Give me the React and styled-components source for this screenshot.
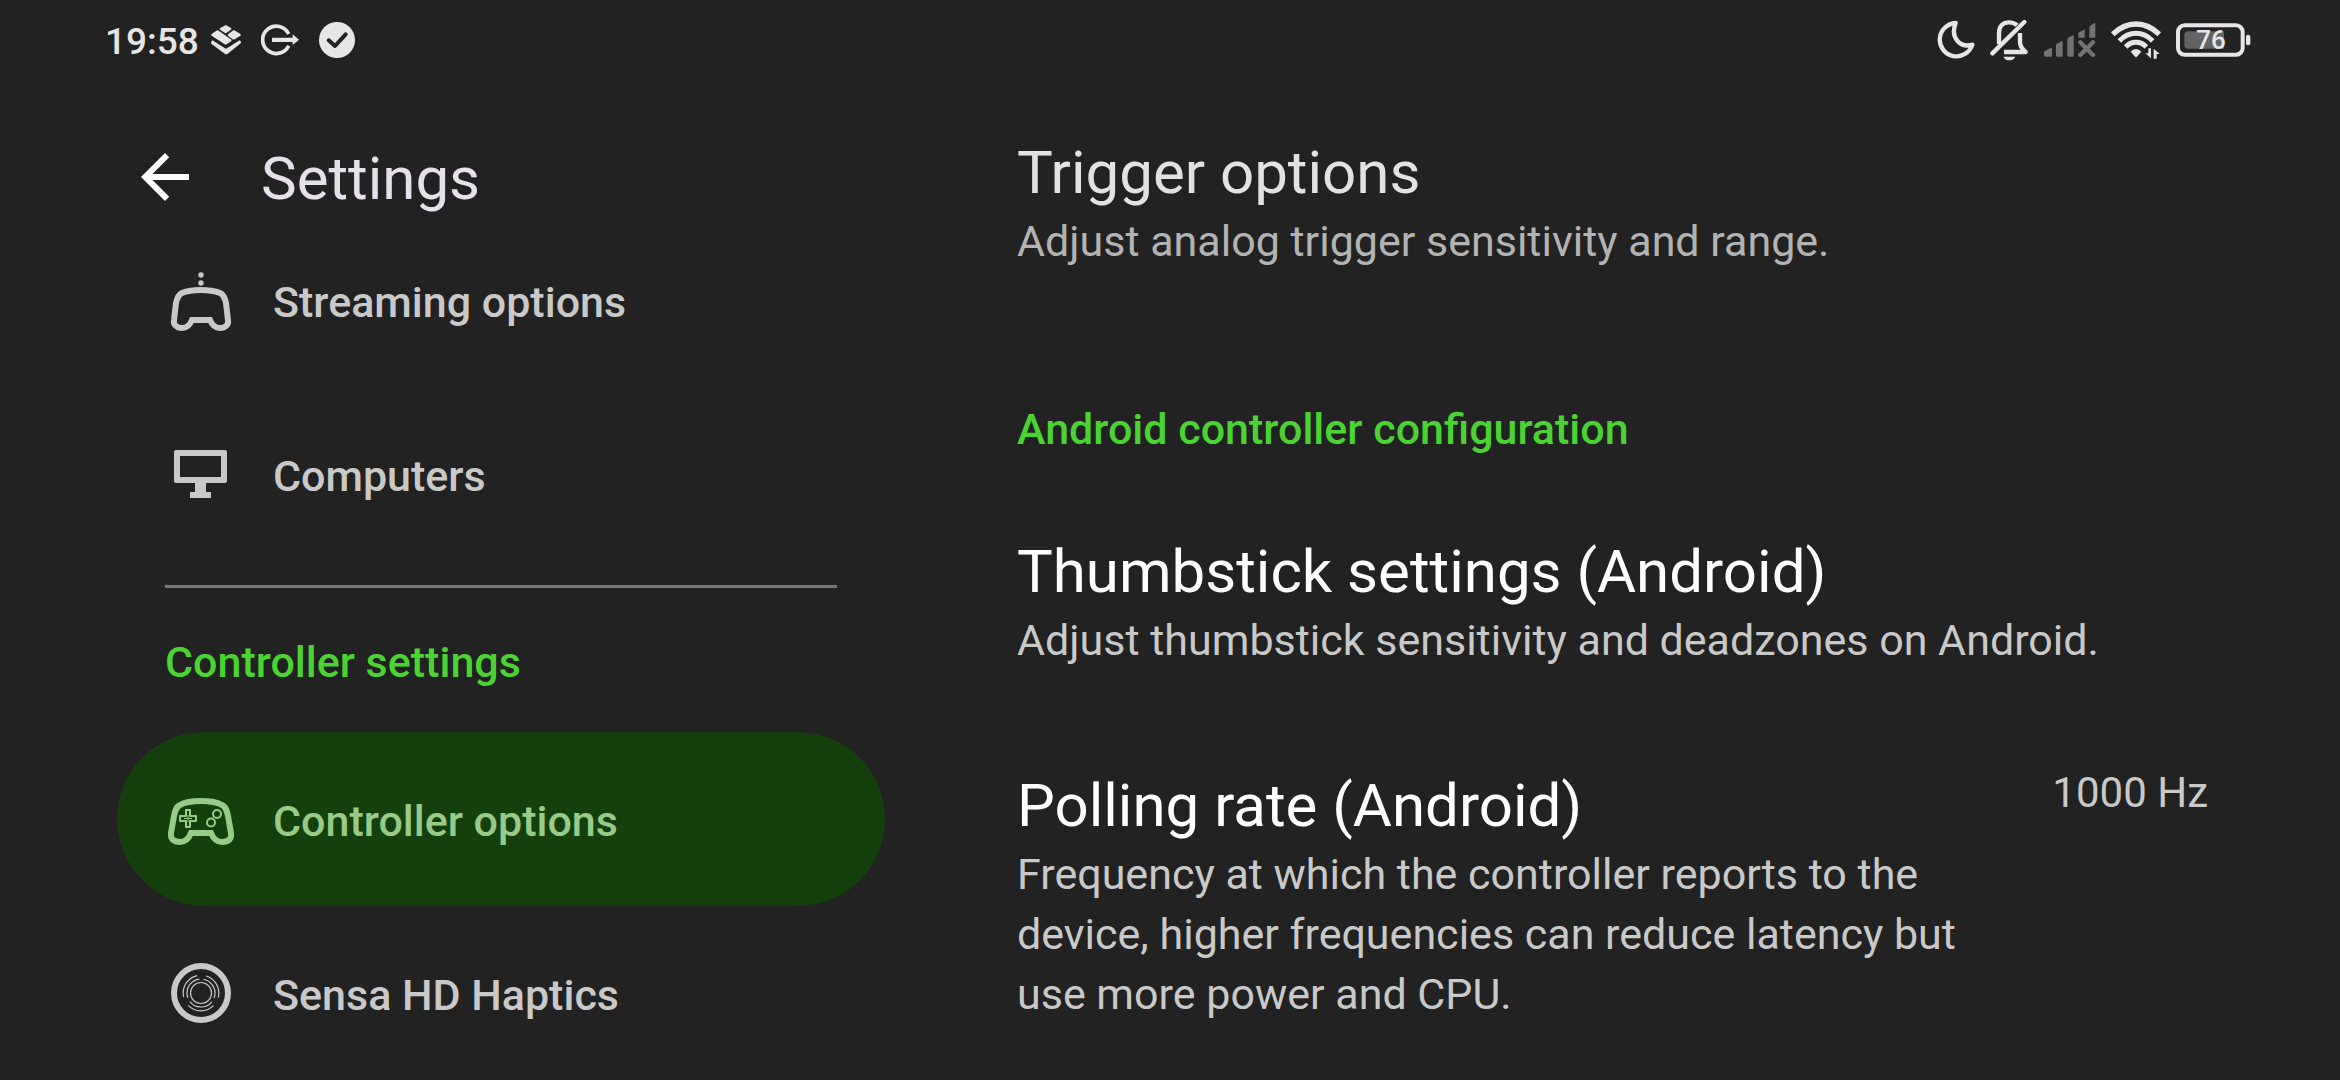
import styled, { createGlobalStyle } from 'styled-components'

const textColor = '#C9C9C9'
const accentColor = '#4BD333'
const statusColor = '#E6E6E6'

const GlobalStyle = createGlobalStyle`
    body {
        margin: 0;
        background-color: #222222;
        color: ${textColor};
        font-family: Roboto, sans-serif;
        overflow: hidden;
    }
`

const Screen = styled.div`
    height: 100vh;
    display: flex;
    flex-direction: column;
    overflow: hidden;
`

const StatusBar = styled.header`
    flex: none;
    height: 80px;
    box-sizing: border-box;
    padding: 0 88px 0 105px;
    display: flex;
    align-items: center;
    justify-content: space-between;
    color: ${statusColor};
`

const StatusGroup = styled.div`
    display: flex;
    align-items: center;
    gap: ${props => props.gap};
`

const Clock = styled.time`
    font-size: 37px;
    line-height: 44px;
    font-weight: 500;
    margin-top: 4px;
    margin-right: -8px;
`

const Glyph = styled.svg`
    display: block;
    flex: none;
    width: ${props => props.$w}px;
    height: ${props => props.$h}px;
`

const Battery = styled.div`
    position: relative;
    display: flex;
`

const BatteryLevel = styled.span`
    position: absolute;
    inset: 0 6px 0 0;
    display: flex;
    align-items: center;
    justify-content: center;
    font-size: 26px;
    font-weight: 500;
`

const Panes = styled.div`
    flex: 1;
    min-height: 0;
    display: grid;
    grid-template-columns: 945px 1fr;
`

const Sidebar = styled.aside`
    min-height: 0;
    padding: 0 60px 0 117px;
`

const Toolbar = styled.div`
    display: flex;
    align-items: center;
    gap: 60px;
    padding: 61px 0 0 12px;
    height: 72px;
`

const BackButton = styled.button`
    display: flex;
    padding: 0;
    border: none;
    background: transparent;
    color: #FFFFFF;
    cursor: pointer;
`

const Title = styled.h1`
    margin: 0;
    padding-top: 4px;
    font-size: 60px;
    line-height: 76px;
    font-weight: 400;
    color: #E6E1E9;
`

const MenuItem = styled.a`
    display: flex;
    align-items: center;
    gap: 36px;
    height: 174px;
    box-sizing: border-box;
    padding: 0 48px;
    border-radius: 87px;
    font-size: 43px;
    line-height: 60px;
    font-weight: 500;
    text-decoration: none;
    color: ${props => props.$active ? '#98CB88' : textColor};
    background-color: ${props => props.$active ? '#15400E' : 'transparent'};
`

const MenuText = styled.span`
    padding-top: 4px;
`

const Divider = styled.hr`
    height: 3px;
    margin: 24px 48px 0;
    border: none;
    background-color: #767876;
`

const MenuLabel = styled.h2`
    margin: 0;
    padding: 44px 48px 40px;
    font-size: 43px;
    line-height: 60px;
    font-weight: 500;
    color: ${accentColor};
`

const Content = styled.main`
    min-height: 0;
    padding: 6px 132px 0 72px;
`

const SectionLabel = styled.h2`
    margin: 0;
    padding: 79px 0 26px;
    font-size: 43px;
    line-height: 60px;
    font-weight: 500;
    color: ${accentColor};
`

const Preference = styled.section`
    display: flex;
    justify-content: space-between;
    gap: 48px;
    padding: 49px 0;
    opacity: ${props => props.$dimmed ? 0.87 : 1};
`

const PreferenceTitle = styled.h3`
    margin: 0;
    font-size: 60px;
    line-height: 76px;
    font-weight: 400;
    color: #FFFFFF;
`

const PreferenceSummary = styled.p`
    margin: 0;
    font-size: 43px;
    line-height: 60px;
`

const PreferenceValue = styled.span`
    flex: none;
    font-size: 42px;
    line-height: 50px;
`

function LayersIcon() {
    return <Glyph $w={30} $h={30} viewBox="0 0 90 90" fill="currentColor">
        <path d="M45 0 60 9Q63 12 60 14L47 23Q44 25 41 23L27 14Q24 11 28 9Z" />
        <path d="M67 16Q70 15 73 17L88 27Q91 30 88 32L71 43Q67 45 64 42L52 33Q49 30 52 27Z" />
        <path d="M16 17Q20 15 23 17L60 43Q63 46 60 49L47 58Q44 60 41 58L2 32Q-1 29 3 26Z" />
        <path d="M4 46 42 70Q45 72 48 70L86 46Q91 50 90 54L50 86Q45 89 41 86L1 56Q-1 51 4 46Z" />
    </Glyph>
}

function ExitIcon() {
    return <Glyph $w={38} $h={32} viewBox="0 0 114 96">
        <path d="M83 30A41 41 0 1 0 83 65" fill="none" stroke="currentColor" strokeWidth="11" />
        <path d="M33 41H95V31L114 47L95 63V54H33Z" fill="currentColor" />
    </Glyph>
}

function CheckBadgeIcon() {
    return <Glyph $w={36} $h={36} viewBox="0 0 108 108">
        <circle cx="54" cy="54" r="54" fill="currentColor" />
        <path d="M29 55 48 72 80 37" fill="none" stroke="#222222" strokeWidth="12" strokeLinecap="round" strokeLinejoin="round" />
    </Glyph>
}

function MoonIcon() {
    return <Glyph $w={38} $h={40} viewBox="0 0 114 120" fill="none" stroke="currentColor" strokeWidth="13" strokeLinejoin="round">
        <path d="M56 9A50 50 0 1 0 106 74C72 84 38 56 56 9Z" />
    </Glyph>
}

function BellOffIcon() {
    return <Glyph $w={39} $h={42} viewBox="0 0 117 126" fill="none" stroke="currentColor" strokeWidth="13">
        <path d="M7 103 103 9" strokeLinecap="round" />
        <path d="M27 76V42C27 19 41 10 57 10C69 10 76 14 81 19" />
        <path d="M90 42V70C90 83 98 92 107 99H42" strokeLinejoin="round" />
        <path d="M40 113H76Q71 124 58 124Q45 124 40 113Z" fill="currentColor" stroke="none" />
    </Glyph>
}

function SignalIcon() {
    return <Glyph $w={52} $h={36} viewBox="0 0 156 108" fill="#737373">
        <path d="M0 91Q0 88 3 87L20 78Q24 77 24 81V104H4Q0 104 0 100Z" />
        <path d="M36 70Q36 66 39 65L52 58Q56 57 56 61V104H40Q36 104 36 100Z" />
        <path d="M70 53Q70 49 73 47L86 40Q89 39 89 43V104H74Q70 104 70 100Z" />
        <path d="M103 37Q103 33 106 31L119 23Q122 22 122 26V47H103Z" />
        <path d="M136 17Q136 13 139 11L151 3Q154 2 154 6V47H136Z" />
        <path d="M109 61 147 99M147 61 109 99" stroke="#737373" strokeWidth="13" strokeLinecap="round" />
    </Glyph>
}

function WifiIcon() {
    return <Glyph $w={50} $h={38} viewBox="0 0 150 114" fill="none" stroke="currentColor">
        <path d="M5 40Q37 9 75 9T145 40" strokeWidth="16" />
        <path d="M25 60Q47 37 75 37T125 60" strokeWidth="15" />
        <path d="M44 78Q57 64 75 64T106 78" strokeWidth="15" />
        <path d="M75 84Q84 84 91 92L75 110 59 92Q66 84 75 84Z" fill="currentColor" stroke="none" />
        <path d="M120 82V112L103 97H112V82ZM128 113V83L146 99H137V113Z" fill="currentColor" stroke="none" />
    </Glyph>
}

function BatteryIcon() {
    return <Glyph $w={76} $h={34} viewBox="0 0 228 102">
        <rect x="6" y="7" width="194" height="88" rx="20" fill="none" stroke="currentColor" strokeWidth="12" />
        <path d="M36 25H144V77H36Q25 77 25 66V36Q25 25 36 25Z" fill="#636363" />
        <rect x="210" y="35" width="13" height="32" rx="6" fill="currentColor" />
    </Glyph>
}

function BackIcon() {
    return <Glyph $w={72} $h={72} viewBox="0 0 24 24" fill="currentColor">
        <path d="M20 11H7.83l5.59-5.59L12 4l-8 8 8 8 1.41-1.41L7.83 13H20v-2z" />
    </Glyph>
}

// The menu icons share one 72 x 72 grid
function StreamingIcon() {
    return <Glyph $w={72} $h={72} viewBox="0 0 72 72" fill="none" stroke="currentColor">
        <path d="M36 26C44 26 50 27 55 29C59 31 60 34 61 39L63 56C64 61 60 64 55 64C50 64 47 61 45 56H27C25 61 22 64 17 64C12 64 8 61 9 56L11 39C12 34 13 31 17 29C22 27 28 26 36 26Z" strokeWidth="6" />
        <circle cx="36" cy="11" r="2.7" fill="currentColor" stroke="none" />
        <circle cx="36" cy="19" r="2.7" fill="currentColor" stroke="none" />
    </Glyph>
}

function ComputerIcon() {
    return <Glyph $w={72} $h={72} viewBox="0 0 72 72" fill="currentColor">
        <path d="M11 12H60Q62 12 62 14V43Q62 45 60 45H41V54H46V60H25V54H30V45H11Q9 45 9 43V14Q9 12 11 12ZM15 18V39H56V18Z" fillRule="evenodd" />
    </Glyph>
}

function ControllerIcon() {
    return <Glyph $w={72} $h={72} viewBox="0 0 72 72" fill="none" stroke="currentColor">
        <path d="M36 18C45 18 52 19 57 22C61 24 62 28 63 33L66 50C67 56 63 59 57 59C51 59 48 55 46 50H26C24 55 21 59 15 59C9 59 5 56 6 50L9 33C10 28 11 24 15 22C20 19 27 18 36 18Z" strokeWidth="6" />
        <path d="M21 27H25V33H31V38H25V44H21V38H15V33H21Z" strokeWidth="2" strokeLinejoin="round" />
        <path d="M23 32V39M19 35.5H27" strokeWidth="1" />
        <circle cx="52" cy="31" r="4" strokeWidth="2" />
        <circle cx="46" cy="39.500" r="4" strokeWidth="2" />
    </Glyph>
}

function HapticsIcon() {
    return <Glyph $w={72} $h={72} viewBox="0 0 72 72" fill="none" stroke="currentColor">
        <circle cx="36" cy="36" r="27" strokeWidth="6" />
        <circle cx="36" cy="36" r="10.5" strokeWidth="1.2" />
        <circle cx="36" cy="36" r="14" strokeWidth="1.2" strokeDasharray="25 4.3" strokeDashoffset="-9.5" />
        <circle cx="36" cy="36" r="17.800" strokeWidth="1.2" strokeDasharray="28 9.300" strokeDashoffset="-14" />
    </Glyph>
}

function MenuEntry(props) {
    return <MenuItem href={props.href} $active={props.active} aria-current={props.active ? 'page' : undefined}>
        {props.icon}
        <MenuText>{props.label}</MenuText>
    </MenuItem>
}

function PreferenceItem(props) {
    return <Preference $dimmed={props.dimmed}>
        <div>
            <PreferenceTitle>{props.title}</PreferenceTitle>
            <PreferenceSummary>{props.summary}</PreferenceSummary>
        </div>
        {props.value && <PreferenceValue>{props.value}</PreferenceValue>}
    </Preference>
}

function App() {
    return <Screen>
        <GlobalStyle />

        <StatusBar>
            <StatusGroup gap="20px">
                <Clock>19:58</Clock>
                <LayersIcon />
                <ExitIcon />
                <CheckBadgeIcon />
            </StatusGroup>

            <StatusGroup gap="15px">
                <MoonIcon />
                <BellOffIcon />
                <SignalIcon />
                <WifiIcon />
                <Battery>
                    <BatteryIcon />
                    <BatteryLevel>76</BatteryLevel>
                </Battery>
            </StatusGroup>
        </StatusBar>

        <Panes>
            <Sidebar>
                <Toolbar>
                    <BackButton aria-label="Back">
                        <BackIcon />
                    </BackButton>
                    <Title>Settings</Title>
                </Toolbar>

                <nav>
                    <MenuEntry href="#streaming" icon={<StreamingIcon />} label="Streaming options" />
                    <MenuEntry href="#computers" icon={<ComputerIcon />} label="Computers" />
                    <Divider />
                    <MenuLabel>Controller settings</MenuLabel>
                    <MenuEntry href="#controller" icon={<ControllerIcon />} label="Controller options" active />
                    <MenuEntry href="#haptics" icon={<HapticsIcon />} label="Sensa HD Haptics" />
                </nav>
            </Sidebar>

            <Content>
                <PreferenceItem
                    title="Trigger options"
                    summary="Adjust analog trigger sensitivity and range."
                    dimmed
                />
                <SectionLabel>Android controller configuration</SectionLabel>
                <PreferenceItem
                    title="Thumbstick settings (Android)"
                    summary="Adjust thumbstick sensitivity and deadzones on Android."
                />
                <PreferenceItem
                    title="Polling rate (Android)"
                    summary="Frequency at which the controller reports to the device, higher frequencies can reduce latency but use more power and CPU."
                    value="1000 Hz"
                />
            </Content>
        </Panes>
    </Screen>
}

export default App
